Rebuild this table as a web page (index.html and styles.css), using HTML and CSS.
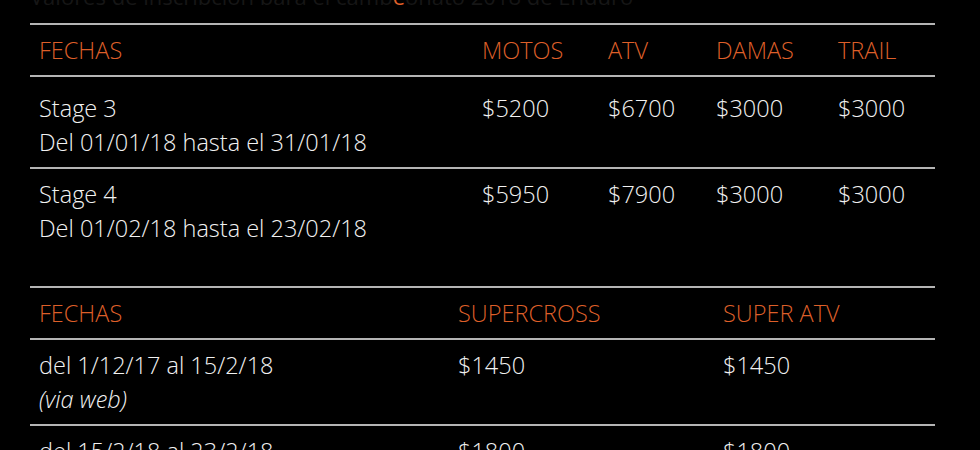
FILE: index.html
```html
<!DOCTYPE html>
<html lang="es">
<head>
<meta charset="utf-8">
<title>Precios</title>
<link rel="stylesheet" href="styles.css">
</head>
<body>
<div class="page">
  <h2 class="title"><span class="title-text">Valores de inscripción para el camp<span class="accent">e</span>onato 2018 de Enduro</span></h2>

  <table class="prices prices-main">
    <colgroup>
      <col class="c-date1"><col class="c-motos"><col class="c-atv"><col class="c-damas"><col class="c-trail">
    </colgroup>
    <thead>
      <tr><th>FECHAS</th><th>MOTOS</th><th>ATV</th><th>DAMAS</th><th>TRAIL</th></tr>
    </thead>
    <tbody>
      <tr class="first">
        <td>Stage 3<br>Del 01/01/18 hasta el 31/01/18</td>
        <td>$5200</td><td>$6700</td><td>$3000</td><td>$3000</td>
      </tr>
      <tr>
        <td>Stage 4<br>Del 01/02/18 hasta el 23/02/18</td>
        <td>$5950</td><td>$7900</td><td>$3000</td><td>$3000</td>
      </tr>
    </tbody>
  </table>

  <table class="prices prices-super">
    <colgroup>
      <col class="c-date2"><col class="c-sx"><col class="c-satv">
    </colgroup>
    <thead>
      <tr><th>FECHAS</th><th>SUPERCROSS</th><th>SUPER ATV</th></tr>
    </thead>
    <tbody>
      <tr>
        <td>del 1/12/17 al 15/2/18<br><em>(via web)</em></td>
        <td>$1450</td><td>$1450</td>
      </tr>
      <tr>
        <td>del 15/2/18 al 23/2/18<br><em>(en el evento)</em></td>
        <td>$1800</td><td>$1800</td>
      </tr>
    </tbody>
  </table>
</div>
</body>
</html>
```

FILE: styles.css
```css
html, body {
  margin: 0;
  padding: 0;
  background: #000;
}

body {
  font-family: "Open Sans", "Liberation Sans", sans-serif;
  font-weight: 300;
  color: #f2f2f2;
  overflow: hidden;
}

.page {
  padding: 0 45px 0 30px;
}

.title {
  margin: 0 0 18px 0;
  height: 5px;
  display: flex;
  align-items: flex-end;
  overflow: hidden;
  font-size: 22px;
  line-height: 18px;
  font-weight: 400;
  color: #161616;
  white-space: nowrap;
}

.title-text {
  display: block;
  flex: none;
}

.title .accent {
  color: #e0602a;
}

.prices {
  width: 905px;
  border-collapse: collapse;
  table-layout: fixed;
  font-size: 23.5px;
  line-height: 34px;
}

.prices th,
.prices td {
  text-align: left;
  vertical-align: top;
  padding: 8px 9px 8px 9px;
  white-space: nowrap;
}

.prices th {
  font-weight: 300;
  color: #dd5f29;
}

.prices thead tr {
  border-top: 2px solid #b4b4b4;
  border-bottom: 2px solid #b4b4b4;
}

.prices tbody tr + tr {
  border-top: 2px solid #b4b4b4;
}

.prices tbody tr.first td {
  padding-top: 14px;
}

.prices em {
  font-style: italic;
}

.prices-main {
  margin-bottom: 33px;
}

.c-date1 { width: 443px; }
.c-motos { width: 126px; }
.c-atv { width: 108px; }
.c-damas { width: 122px; }
.c-trail { width: 106px; }

.c-date2 { width: 419px; }
.c-sx { width: 265px; }
.c-satv { width: 221px; }
```
